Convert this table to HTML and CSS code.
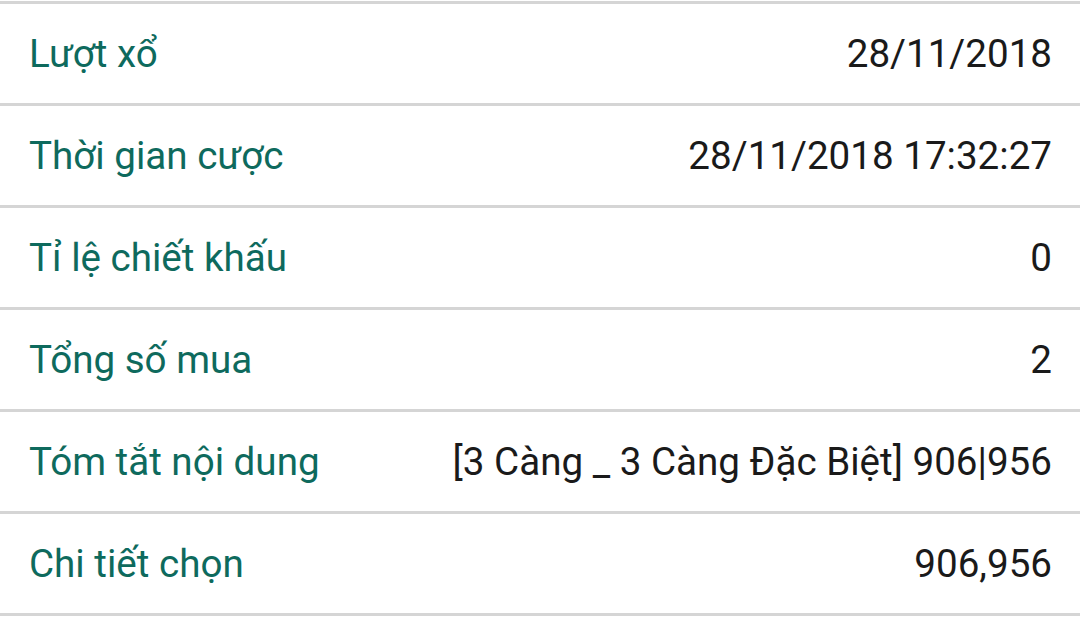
FILE: index.html
```html
<!DOCTYPE html>
<html lang="vi">
<head>
<meta charset="utf-8">
<title>Chi tiết cược</title>
<link rel="stylesheet" href="styles.css">
</head>
<body>
<div class="list">
  <div class="row"><span class="label">Lượt xổ</span><span class="value">28/11/2018</span></div>
  <div class="row"><span class="label">Thời gian cược</span><span class="value">28/11/2018 17:32:27</span></div>
  <div class="row"><span class="label">Tỉ lệ chiết khấu</span><span class="value">0</span></div>
  <div class="row"><span class="label">Tổng số mua</span><span class="value">2</span></div>
  <div class="row"><span class="label">Tóm tắt nội dung</span><span class="value">[3 Càng _ 3 Càng Đặc Biệt] 906|956</span></div>
  <div class="row"><span class="label">Chi tiết chọn</span><span class="value">906,956</span></div>
</div>
</body>
</html>
```
FILE: styles.css
```css
html, body {
  margin: 0;
  padding: 0;
  background: #ffffff;
}
body {
  padding-top: 1px;
  font-family: Roboto, "Noto Sans", sans-serif;
}
.list {
  border-top: 3px solid #d5d5d5;
}
.row {
  display: flex;
  justify-content: space-between;
  align-items: center;
  height: 99px;
  padding: 0 28px 0 29px;
  border-bottom: 3px solid #d5d5d5;
  font-size: 38.6px;
}
.label {
  color: #0e6a5d;
}
.value {
  color: #1a1a1a;
}
```
